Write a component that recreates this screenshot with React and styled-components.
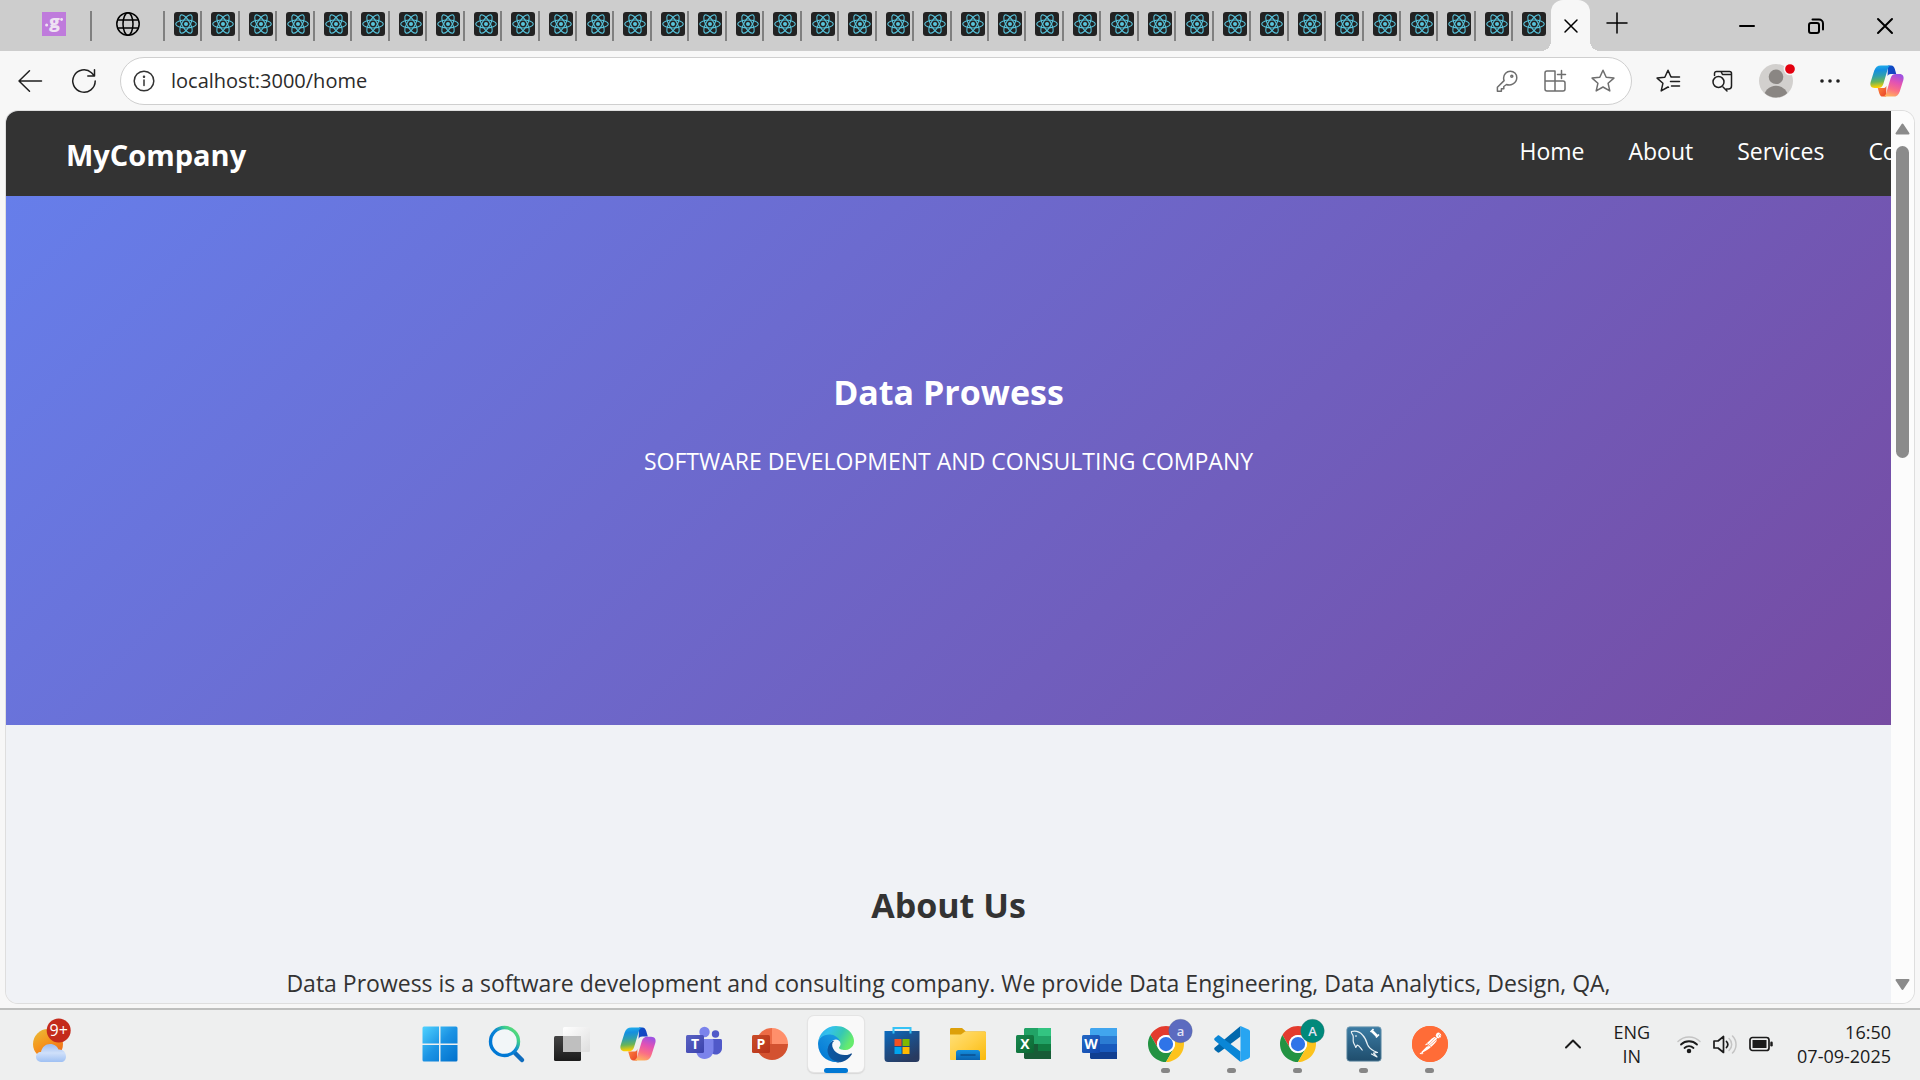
import React from "react";
import styled, { createGlobalStyle, css } from "styled-components";
import { SiPostman } from "react-icons/si";

const GlobalStyle = createGlobalStyle`
  * { box-sizing: border-box; }
  html, body { margin: 0; }
  body {
    font-family: "Segoe UI", "Open Sans", "Noto Sans", sans-serif;
    overflow: hidden;
  }
  button { border: 0; padding: 0; background: none; color: inherit; font: inherit; }
  svg { display: block; flex: none; overflow: visible; }
`;

const Screen = styled.div`
  height: 100vh;
  display: flex;
  flex-direction: column;
  background: #f7f7f7;
`;

/* ---------- browser: tab strip ---------- */

const TabStrip = styled.div`
  flex: none;
  height: 51px;
  display: flex;
  background: #cdcdcd;
`;

const Tabs = styled.div`
  flex: 1;
  min-width: 0;
  display: flex;
`;

const Tab = styled.button`
  flex: ${(p) => (p.$pinned ? "none" : "1 1 0")};
  width: ${(p) => p.$pinned || "auto"};
  min-width: 0;
  display: flex;
  align-items: flex-start;
  justify-content: space-between;
  padding: 11px 0 0 ${(p) => p.$inset || "9px"};
  svg { margin-top: 1px; }
  &::after {
    content: "";
    width: 2px;
    height: 30px;
    background: ${(p) => (p.$last ? "transparent" : "#808080")};
  }
`;

const ActiveTab = styled.button`
  position: relative;
  flex: none;
  width: 39px;
  display: flex;
  align-items: center;
  justify-content: center;
  background: #f7f7f7;
  border-radius: 12px 12px 0 0;
  &::before,
  &::after {
    content: "";
    position: absolute;
    bottom: 0;
    width: 10px;
    height: 10px;
  }
  &::before {
    right: 100%;
    background: radial-gradient(circle at 0 0, transparent 10px, #f7f7f7 10px);
  }
  &::after {
    left: 100%;
    background: radial-gradient(circle at 100% 0, transparent 10px, #f7f7f7 10px);
  }
`;

const NewTab = styled.button`
  flex: none;
  width: 53px;
  padding-bottom: 5px;
  display: flex;
  align-items: center;
  justify-content: center;
`;

const WindowControls = styled.div`
  flex: none;
  display: flex;
  padding: 0 1px 0 69px;
`;

const WindowButton = styled.button`
  width: 69px;
  display: flex;
  align-items: center;
  justify-content: center;
`;

/* ---------- browser: toolbar ---------- */

const Toolbar = styled.div`
  flex: none;
  height: 60px;
  display: flex;
  align-items: center;
  padding: 0 3px;
`;

const ToolButton = styled.button`
  position: relative;
  flex: none;
  width: 54px;
  height: 48px;
  display: flex;
  align-items: center;
  justify-content: center;
  color: ${(p) => (p.$muted ? "#6e6e6e" : "#1f1f1f")};
  ${(p) => p.$narrow && css`width: 48px;`}
  ${(p) => p.$wide && css`width: 60px;`}
`;

const AddressBar = styled.label`
  flex: 1;
  height: 48px;
  margin: 0 9px;
  padding: 0 4px 0 12px;
  display: flex;
  align-items: center;
  background: #fff;
  border: 1px solid #cfcfcf;
  border-radius: 24px;
  color: #333;
`;

const AddressInput = styled.input`
  flex: 1;
  min-width: 0;
  margin-left: 16px;
  padding: 0;
  border: 0;
  outline: 0;
  background: none;
  font: inherit;
  font-size: 20px;
  line-height: 28px;
  color: #2b2b2b;
`;

/* ---------- web page ---------- */

const Viewport = styled.div`
  flex: 1;
  min-height: 0;
  margin: 0 6px 5px;
  display: flex;
  overflow: hidden;
  border-radius: 12px;
  box-shadow: 0 0 0 1px #dedede;
`;

const Page = styled.div`
  flex: 1;
  min-width: 0;
  overflow: hidden;
  background: #f0f2f6;
  text-align: center;
`;

const Navbar = styled.nav`
  box-sizing: content-box;
  width: 100%;
  height: 85px;
  padding: 0 60px;
  display: flex;
  justify-content: space-between;
  background: #333;
  color: #fff;
`;

const Brand = styled.div`
  font-size: 29px;
  font-weight: 700;
  line-height: 40px;
  padding-top: 24px;
`;

const NavLinks = styled.ul`
  margin: 0;
  padding: 24px 0 0;
  display: flex;
  gap: 44px;
  list-style: none;
`;

const NavLink = styled.a`
  color: #fff;
  text-decoration: none;
  font-size: 23px;
  line-height: 32px;
`;

const Hero = styled.header`
  height: 529px;
  padding-top: 172px;
  background: linear-gradient(135deg, #667eea 0%, #764ba2 100%);
  color: #fff;
`;

const Title = styled.h1`
  margin: 0;
  font-size: 34px;
  font-weight: 700;
  line-height: 48px;
`;

const Lead = styled.p`
  margin: ${(p) => p.$gap} 0 0;
  font-size: 23px;
  line-height: 32px;
`;

const About = styled.section`
  padding-top: 156px;
  color: #333;
  white-space: nowrap;
`;

/* ---------- page scrollbar ---------- */

const Scrollbar = styled.div`
  flex: none;
  width: 23px;
  display: flex;
  flex-direction: column;
  align-items: center;
  padding: 12px 0;
  background: #fcfcfc;
`;

const Track = styled.div`
  flex: 1;
  margin: 11px 0;
  width: 13px;
`;

const Thumb = styled.div`
  height: 38%;
  border-radius: 7px;
  background: #8b8b8b;
`;

/* ---------- taskbar ---------- */

const Taskbar = styled.div`
  flex: none;
  height: 72px;
  display: grid;
  grid-template-columns: 8fr auto 9fr;
  background: #eeefef;
  border-top: 2px solid #bebfbe;
`;

const Weather = styled.button`
  place-self: start;
  padding: 8px 0 0 33px;
`;

const Apps = styled.div`
  display: flex;
`;

const AppButton = styled.button`
  width: 66px;
  display: flex;
  flex-direction: column;
  align-items: center;
  padding-top: 6px;
`;

const AppTile = styled.span`
  width: 56px;
  height: 56px;
  padding: 10px;
  display: block;
  border-radius: 6px;
  ${(p) => p.$active && css`
    background: #f9f9f9;
    box-shadow: 0 0 0 1px #e4e4e4, 0 1px 1px 1px #d8d8d8;
  `}
`;

const Indicator = styled.span`
  position: relative;
  width: ${(p) => (p.$active ? "24px" : "9px")};
  height: 5px;
  margin-top: -4px;
  border-radius: 3px;
  background: ${(p) => (p.$active ? "#0078d4" : "#868686")};
`;

const Tray = styled.div`
  display: flex;
  align-items: center;
  justify-content: flex-end;
  padding: 0 29px 3px 0;
  color: #1b1b1b;
  font-size: 18px;
  line-height: 24px;
`;

const TrayButton = styled.button`
  display: flex;
  gap: 12px;
  justify-content: center;
  white-space: pre-line;
  margin-left: ${(p) => p.$gap};
  text-align: ${(p) => p.$align || "center"};
`;

/* ---------- icons ---------- */

const Line = ({ w, h = w, sw = 1.5, children }) => (
  <svg width={w} height={h} viewBox={`0 0 ${w} ${h}`} fill="none" stroke="currentColor"
    strokeWidth={sw} strokeLinecap="round" strokeLinejoin="round" aria-hidden="true">
    {children}
  </svg>
);

const Art = ({ size = 36, children }) => (
  <svg width={size} height={size} viewBox={`0 0 ${size} ${size}`} aria-hidden="true"
    fontFamily="Open Sans, sans-serif">
    {children}
  </svg>
);

const Grad = ({ id, stops, x1 = 0, y1 = 0, x2 = 0, y2 = 1 }) => (
  <linearGradient id={id} x1={x1} y1={y1} x2={x2} y2={y2}>
    {stops.map((c, i) => (
      <stop key={i} offset={i / (stops.length - 1)} stopColor={c} />
    ))}
  </linearGradient>
);

const ReactIcon = () => (
  <Art size={24}>
    <rect width="24" height="24" rx="3" fill="#222" />
    <g fill="none" stroke="#58c4dc" strokeWidth="1.1">
      {[0, 60, 120].map((r) => (
        <ellipse key={r} cx="12" cy="12" rx="10.3" ry="4" transform={`rotate(${r} 12 12)`} />
      ))}
    </g>
    <circle cx="12" cy="12" r="2" fill="#58c4dc" />
  </Art>
);

const GIcon = () => (
  <Art size={24}>
    <rect width="24" height="24" fill="#bf7bdc" />
    <text x="12.5" y="16" fontSize="18" fontWeight="800" fill="#eee2f2" textAnchor="middle">g</text>
    <circle cx="4.6" cy="13" r="1.5" fill="#eee2f2" />
    <circle cx="19.6" cy="7.5" r="1.4" fill="#eee2f2" />
  </Art>
);

const GlobeIcon = () => (
  <Line w={24}>
    <circle cx="12" cy="12" r="11.2" />
    <ellipse cx="12" cy="12" rx="5" ry="11.2" />
    <path d="M2 8h20M2 16h20" />
  </Line>
);

const CopilotIcon = ({ id, size = 36 }) => (
  <svg width={size} height={size} viewBox="0 0 36 36" aria-hidden="true">
    <defs>
      <Grad id={`${id}a`} x2={0.1} stops={["#22b4ee", "#148fe0", "#2f9fae", "#68b45a", "#ffd000"]} />
      <Grad id={`${id}b`} x1={0.6} x2={0.3} stops={["#a052e0", "#e252b4", "#fb6f85", "#ffb45c"]} />
      <Grad id={`${id}c`} x2={1} stops={["#0a50c8", "#1a3fbf"]} />
      <Grad id={`${id}d`} x2={1} stops={["#ff8a3c", "#e8402a"]} />
    </defs>
    <path d="M19 1.500h3.500c2 0 3.100 1.500 3.700 3.600l1.600 5.400h-5.600c-2 0-3 .8-3.600 2.600z" fill={`url(#${id}c)`} />
    <path d="M17 34.500h-3.500c-2 0-3.100-1.500-3.700-3.600l-1.600-5.400h5.600c2 0 3-.8 3.600-2.600z" fill={`url(#${id}d)`} />
    <path d="M11.500 1.500h11c-2 .2-3 1.600-3.700 3.900l-4.600 15.400c-.9 3-2.500 4.500-5.500 4.500H5C1 25.300-.3 22.400.7 19L4.500 7C5.800 3.300 7.800 1.500 11.500 1.500z" fill={`url(#${id}a)`} />
    <path d="M24.500 34.500h-11c2-.2 3-1.600 3.700-3.900l4.600-15.400c.9-3 2.500-4.500 5.500-4.500H31c4 0 5.300 2.900 4.300 6.300L31.500 29c-1.300 3.700-3.300 5.500-7 5.500z" fill={`url(#${id}b)`} />
  </svg>
);

const StartIcon = () => (
  <Art>
    <defs><Grad id="win" x2={1} stops={["#4fd2ff", "#1b93e4", "#0070cc"]} /></defs>
    <path d="M2 .5h15v17H.5V2A1.500 1.500 0 0 1 2 .5zM18.500.5H34A1.500 1.500 0 0 1 35.500 2v15.500h-17zM.5 19H17v16.500H2A1.500 1.500 0 0 1 .5 34zM18.500 19h17v15a1.500 1.500 0 0 1-1.500 1.500H18.500z" fill="url(#win)" />
  </Art>
);

const SearchIcon = () => (
  <Art>
    <defs><Grad id="find" x1={1} x2={0.3} y2={0.7} stops={["#6be06a", "#3fd08a", "#0a84d8", "#0078d4"]} /></defs>
    <path d="M26 26l8 8" stroke="#0f6cbd" strokeWidth="4.500" strokeLinecap="round" />
    <circle cx="16.500" cy="15.500" r="14" fill="#f2f6f8" stroke="url(#find)" strokeWidth="3.400" />
  </Art>
);

const TaskViewIcon = () => (
  <Art>
    <defs>
      <Grad id="tvd" stops={["#444", "#1b1b1b"]} />
      <Grad id="tvl" x2={1} stops={["#ffffff", "#dedede"]} />
    </defs>
    <rect x="0" y="10" width="27" height="25" rx="1.500" fill="url(#tvd)" />
    <rect x="9" y="1" width="27" height="25" rx="1.500" fill="url(#tvl)" />
    <rect x="9" y="10" width="18" height="16" fill="#bfbfbf" />
  </Art>
);

const LetterBadge = ({ letter, colors }) => (
  <>
    <defs><Grad id={`lb${letter}`} x2={1} stops={colors} /></defs>
    <rect x="0" y="9" width="18" height="18" rx="1.500" fill={`url(#lb${letter})`} />
    <text x="9" y="23" fontSize="14" fontWeight="700" fill="#fff" textAnchor="middle">{letter}</text>
  </>
);

const TeamsIcon = () => (
  <Art>
    <circle cx="29.500" cy="8" r="3.700" fill="#5059c9" />
    <path d="M24 13h10.500c.8 0 1.500.7 1.500 1.500V22c0 4-3 6.500-6 6.500S24 27 24 24z" fill="#5059c9" />
    <circle cx="18.500" cy="6" r="5.200" fill="#7b83eb" />
    <path d="M10 13h16c.8 0 1.500.7 1.500 1.500V24c0 5-4 9-9 9s-8.500-4-8.500-9z" fill="#7b83eb" />
    <LetterBadge letter="T" colors={["#5a62c3", "#3a41ac"]} />
  </Art>
);

const PowerPointIcon = () => (
  <Art>
    <path d="M20 2v16H4A16 16 0 0 1 20 2z" fill="#ed6c47" />
    <path d="M20 2a16 16 0 0 1 16 16H20z" fill="#ff8f6b" />
    <path d="M4 18h32a16 16 0 0 1-32 0z" fill="#d35230" />
    <LetterBadge letter="P" colors={["#ca4c28", "#b7321a"]} />
  </Art>
);

const EdgeIcon = () => (
  <svg width="36" height="36" viewBox="0 0 256 256" aria-hidden="true">
    <defs>
      <Grad id="e1" x2={1} y2={0} stops={["#0c59a4", "#114a8b"]} />
      <Grad id="e2" x1={0.8} x2={0.2} stops={["#1b9de2", "#1188da", "#0078d4"]} />
      <Grad id="e3" x2={1} y2={0.4} stops={["#2aa8e6", "#34c1ed", "#36c8b4", "#66eb6e"]} />
    </defs>
    <path fill="url(#e1)" d="M235.680 195.455a93.730 93.730 0 01-10.540 4.710 101.870 101.870 0 01-35.900 6.460c-47.320 0-88.540-32.550-88.540-74.320a31.480 31.480 0 0116.430-27.310c-42.800 1.800-53.800 46.400-53.800 72.530 0 73.880 68.090 81.370 82.760 81.370 7.910 0 19.840-2.300 27-4.560l1.310-.44a128.340 128.340 0 0066.600-52.800 4 4 0 00-5.320-5.640z" />
    <path fill="url(#e2)" d="M105.730 241.415a79.200 79.200 0 01-22.740-21.340 80.720 80.720 0 0129.530-120c3.130-1.470 8.410-4.050 15.510-3.930a32.440 32.440 0 0125.670 13 31.880 31.880 0 016.360 18.660c0-.21 24.460-79.600-80-79.600-43.900 0-80 41.660-80 78.210a130.150 130.150 0 0012.110 56 128 128 0 00156.380 67.110 75.550 75.550 0 01-62.780-8.110z" />
    <path fill="url(#e3)" d="M152.330 148.855c-.81 1.050-3.300 2.500-3.300 5.660 0 2.610 1.700 5.120 4.720 7.230 14.380 10 41.490 8.680 41.560 8.680a59.560 59.560 0 0030.270-8.350 61.380 61.380 0 0030.430-52.880c.26-22.410-8-37.310-11.340-43.910-21.190-41.440-66.920-65.280-116.670-65.280a128 128 0 00-128 126.200c.48-36.540 36.800-66.050 80-66.050 3.500 0 23.460.34 42 10.070 16.340 8.580 24.900 18.940 30.850 29.210 6.180 10.670 7.280 24.150 7.280 29.520 0 5.370-2.740 13.330-7.800 19.900z" />
  </svg>
);

const StoreIcon = () => (
  <Art>
    <defs><Grad id="store" x2={0.6} stops={["#0a6cc0", "#1c4f8a", "#283a60"]} /></defs>
    <path d="M.5 5h35v27.500A3.500 3.500 0 0 1 32 36H4a3.500 3.500 0 0 1-3.500-3.500z" fill="url(#store)" />
    <path d="M9.500 7.500V2h17v5.500" fill="none" stroke="#35c2f5" strokeWidth="2" />
    <path d="M10.500 13h7v7h-7z" fill="#f25022" />
    <path d="M18.500 13h7v7h-7z" fill="#7fba00" />
    <path d="M10.500 21h7v7h-7z" fill="#00a4ef" />
    <path d="M18.500 21h7v7h-7z" fill="#ffb900" />
  </Art>
);

const FolderIcon = () => (
  <Art>
    <defs>
      <Grad id="fold" x2={1} stops={["#ffe07a", "#ffcf45", "#f9b90a"]} />
      <Grad id="foldb" stops={["#1490df", "#0a63b0"]} />
    </defs>
    <path d="M0 3.500C0 2.600.6 2 1.500 2H12l4 3.500h18.500c.9 0 1.500.6 1.500 1.500v6H0z" fill="#dda00a" />
    <path d="M0 8.500h11l4-3h19.500c.9 0 1.500.6 1.500 1.500v26c0 .6-.4 1-1 1H1c-.6 0-1-.4-1-1z" fill="url(#fold)" />
    <path d="M6 34v-7.500A2.500 2.500 0 0 1 8.500 24h19a2.500 2.500 0 0 1 2.500 2.500V34z" fill="url(#foldb)" />
    <path d="M11 29h14" stroke="#0b4f8e" strokeWidth="1.500" strokeLinecap="round" />
  </Art>
);

const ExcelIcon = () => (
  <Art>
    <path d="M9 2h13v8H8V3z" fill="#21a366" />
    <path d="M22 2h13v8H22z" fill="#33c481" />
    <path d="M8 10h14v8H8z" fill="#21a366" />
    <path d="M22 10h13v8H22z" fill="#21a366" />
    <path d="M8 18h27v15H9l-1-1z" fill="#185c37" />
    <path d="M22 18h13v7H22z" fill="#107c41" />
    <LetterBadge letter="X" colors={["#18884f", "#0b6631"]} />
  </Art>
);

const WordIcon = () => (
  <Art>
    <path d="M9 2h26v8H8V3z" fill="#41a5ee" />
    <path d="M8 10h27v8H8z" fill="#2b7cd3" />
    <path d="M8 18h27v8H8z" fill="#185abd" />
    <path d="M8 26h27v7H9l-1-1z" fill="#103f91" />
    <LetterBadge letter="W" colors={["#2368c4", "#1146ac"]} />
  </Art>
);

const ChromeIcon = ({ letter, color }) => (
  <Art>
    <g transform="scale(.75)">
      <path d="M24 12h20.780A24 24 0 0 0 3.220 12L13.600 30A12 12 0 0 1 24 12z" fill="#e33b2e" />
      <path d="M13.600 30L3.220 12A24 24 0 0 0 24 48L34.400 30A12 12 0 0 1 13.600 30z" fill="#229342" />
      <path d="M34.400 30L24 48A24 24 0 0 0 44.780 12H24A12 12 0 0 1 34.400 30z" fill="#fcc31e" />
      <circle cx="24" cy="24" r="12" fill="#fff" />
      <circle cx="24" cy="24" r="9.500" fill="#2f74e8" />
    </g>
    <circle cx="32.500" cy="5" r="11.800" fill={color} stroke="#55606a" strokeOpacity=".4" strokeWidth=".5" />
    <text x="32.500" y="9.500" fontSize="13" fontWeight="600" fill="#e2e4f4" textAnchor="middle">{letter}</text>
  </Art>
);

const CodeIcon = () => (
  <Art>
    <path d="M26.500 0v10.500L5.500 26.300c-.7.500-1.500.5-2 0L.8 24c-.8-.7-.8-1.700 0-2.400z" fill="#0068ad" />
    <path d="M26.500 36V25.500L5.500 9.700c-.7-.5-1.500-.5-2 0L.8 12c-.8.7-.8 1.700 0 2.400z" fill="#0a86d6" />
    <path d="M26.500 0l8 3.500c1 .5 1.500 1.200 1.500 2.200v24.600c0 1-.5 1.700-1.500 2.200l-8 3.500z" fill="#27a5f2" />
  </Art>
);

const WorkbenchIcon = () => (
  <Art>
    <defs><Grad id="wb" stops={["#3b7ca4", "#2d6488", "#1f4d6c"]} /></defs>
    <rect x=".8" y=".8" width="34.400" height="34.400" rx="3" fill="url(#wb)" stroke="#7fa3b8" strokeWidth=".8" />
    <g fill="none" stroke="#e8f0f4" strokeWidth="1.200" strokeLinecap="round" strokeLinejoin="round">
      <path d="M5.500 5.500c4-1 8 0 11 3.500 3 3 4 6 5 9.500 1 3 3 4.500 6.500 6.500l3.500 1.500-4 .5 3.500 4-5.500-3" />
      <path d="M5.500 5.500c-.6 1.500.8 2.500 1.500 4 .8 2-.4 4.500.5 7 .6 1.800 1.800 3 2.300 5l1.400-2.500c2 .5 3 2.500 5 5" />
      <path d="M10 9.500v1" />
    </g>
    <path d="M26 5l5 5" stroke="#fff" strokeWidth="2.600" />
    <path d="M24.500 6l3-3M30 11.500l3-3" stroke="#fff" strokeWidth="1.600" />
  </Art>
);

const PostmanDisc = styled.span`
  display: block;
  border-radius: 50%;
  background: radial-gradient(circle, #fff 66%, #ff6c37 67%);
  color: #ff6c37;
`;

const PostmanIcon = () => <PostmanDisc><SiPostman size={36} /></PostmanDisc>;

const WeatherIcon = () => (
  <svg width="40" height="44" viewBox="0 0 40 44" aria-hidden="true" fontFamily="Open Sans, sans-serif">
    <defs>
      <Grad id="sun" x2={0.6} stops={["#e8bf3a", "#f5971e", "#ef6c1a"]} />
      <Grad id="cloud" stops={["#9dbcf0", "#cfe0fa", "#9fc0f3"]} />
    </defs>
    <circle cx="15" cy="26" r="15" fill="url(#sun)" />
    <path d="M8 44a5 5 0 0 1-5-5c0-3 2-5 5-5 1-5 4.500-8 9-8s7.500 2.500 8.500 5.500c4.500-.5 7.500 3 7.500 7 0 3.500-2 5.500-5 5.500z" fill="url(#cloud)" />
    <circle cx="25.700" cy="12.500" r="12" fill="#c42b1c" />
    <text x="25.700" y="18" fontSize="16" fill="#fff" textAnchor="middle">9+</text>
  </svg>
);

const Arrow = ({ down }) => (
  <svg width="15" height="12" viewBox="0 0 15 12" aria-hidden="true">
    <path d={down ? "M1.500 1h12L7.500 10z" : "M1.500 10.500h12L7.500 1.500z"}
      fill="#8b8b8b" stroke="#8b8b8b" strokeWidth="2" strokeLinejoin="round" />
  </svg>
);

const star = "M12 1.200l3.200 7.100 7.700.8-5.800 5.200 1.700 7.600L12 18l-6.800 3.900 1.700-7.600L1.100 9.100l7.700-.8z";

const REACT_TABS = Array.from({ length: 37 }, (_, i) => i);

const APPS = [
  { name: "Start", icon: <StartIcon /> },
  { name: "Search", icon: <SearchIcon /> },
  { name: "Task View", icon: <TaskViewIcon /> },
  { name: "Copilot", icon: <CopilotIcon id="cpt" /> },
  { name: "Teams", icon: <TeamsIcon /> },
  { name: "PowerPoint", icon: <PowerPointIcon /> },
  { name: "Edge", icon: <EdgeIcon />, running: true, active: true },
  { name: "Store", icon: <StoreIcon /> },
  { name: "File Explorer", icon: <FolderIcon /> },
  { name: "Excel", icon: <ExcelIcon /> },
  { name: "Word", icon: <WordIcon /> },
  { name: "Chrome", icon: <ChromeIcon letter="a" color="#5c6bc0" />, running: true },
  { name: "Code", icon: <CodeIcon />, running: true },
  { name: "Chrome, second profile", icon: <ChromeIcon letter="A" color="#00897b" />, running: true },
  { name: "Workbench", icon: <WorkbenchIcon />, running: true },
  { name: "Postman", icon: <PostmanIcon />, running: true },
];

export default function App() {
  return (
    <Screen>
      <GlobalStyle />
      <TabStrip>
        <Tabs>
          <Tab $pinned="92px" $inset="42px" aria-label="Pinned tab"><GIcon /></Tab>
          <Tab $pinned="73px" $inset="24px" aria-label="Pinned tab"><GlobeIcon /></Tab>
          {REACT_TABS.map((i) => (
            <Tab key={i} $last={i === REACT_TABS.length - 1} aria-label={`React App ${i + 1}`}>
              <ReactIcon />
            </Tab>
          ))}
        </Tabs>
        <ActiveTab aria-label="Close tab">
          <Line w={14}><path d="M1 1l12 12M13 1L1 13" /></Line>
        </ActiveTab>
        <NewTab aria-label="New tab">
          <Line w={22}><path d="M11 1v20M1 11h20" /></Line>
        </NewTab>
        <WindowControls>
          <WindowButton aria-label="Minimize"><Line w={16} sw={2}><path d="M1 8h14" /></Line></WindowButton>
          <WindowButton aria-label="Restore">
            <Line w={16} sw={2}>
              <rect x="1" y="5" width="10" height="10" rx="2" />
              <path d="M4.500 1.500H11a4 4 0 0 1 4 4v6" />
            </Line>
          </WindowButton>
          <WindowButton aria-label="Close"><Line w={16} sw={2}><path d="M1 1l14 14M15 1L1 15" /></Line></WindowButton>
        </WindowControls>
      </TabStrip>

      <Toolbar>
        <ToolButton aria-label="Back">
          <Line w={24}><path d="M23.500 12H1M11.500 1.800L1 12l10.500 10.200" /></Line>
        </ToolButton>
        <ToolButton aria-label="Refresh">
          <Line w={24}><path d="M23.200 12A11.200 11.200 0 1 1 19.500 3.700L22.500 7M22.500.8V7h-6.700" /></Line>
        </ToolButton>
        <AddressBar>
          <Line w={22}>
            <circle cx="11" cy="11" r="9.800" />
            <path d="M11 10v5.500" />
            <circle cx="11" cy="6.800" r=".5" fill="currentColor" />
          </Line>
          <AddressInput aria-label="Address" defaultValue="localhost:3000/home" />
          <ToolButton $muted $narrow aria-label="Passwords">
            <Line w={22}>
              <path d="M8.100 10.600L1.400 17.300v3.900h4v-2.400h2.400v-2.300l2.700-2c4 1.700 10-1 10.300-6.800C20.800 4 18 1.200 14.300 1.200S7.600 4.200 7.600 8c0 1 .2 1.800.5 2.600z" />
              <circle cx="15.800" cy="6.200" r="1" />
            </Line>
          </ToolButton>
          <ToolButton $muted $narrow aria-label="Apps">
            <Line w={22}>
              <path d="M1 3a2 2 0 0 1 2-2h8v20H3a2 2 0 0 1-2-2zM1 11h18a2 2 0 0 1 2 2v6a2 2 0 0 1-2 2h-8M17.500.500v8M13.500 4.500h8" />
            </Line>
          </ToolButton>
          <ToolButton $muted $narrow aria-label="Add to favorites"><Line w={24}><path d={star} /></Line></ToolButton>
        </AddressBar>
        <ToolButton aria-label="Favorites">
          <Line w={24}>
            <path d="M12.500 18.300L12 18l-6.800 3.900 1.700-7.600L1.100 9.100l7.700-.8L12 1.200l3 6.800M15.500 8h8M14.500 12.500h9M15.500 17h8" />
          </Line>
        </ToolButton>
        <ToolButton aria-label="Search tabs">
          <Line w={22}>
            <path d="M3.500 5.500V3.500a2 2 0 0 1 2-2h13a2 2 0 0 1 2 2V16a3 3 0 0 1-3 3h-2M10 1.500l1.500 3h9M12 17l4 4" />
            <circle cx="7.500" cy="12" r="5.500" />
          </Line>
        </ToolButton>
        <ToolButton aria-label="Profile">
          <Art size={34}>
            <defs><clipPath id="av"><circle cx="17" cy="17" r="16.500" /></clipPath></defs>
            <circle cx="17" cy="17" r="17" fill="#d2d0ce" />
            <g clipPath="url(#av)" fill="#8a8683">
              <circle cx="17" cy="12.800" r="7.300" />
              <circle cx="17" cy="34" r="12.300" />
            </g>
            <circle cx="31" cy="5" r="5.600" fill="#e3000f" stroke="#f7f7f7" strokeWidth="1.500" />
          </Art>
        </ToolButton>
        <ToolButton aria-label="More">
          <Line w={22}>
            <g fill="currentColor" stroke="none">
              <circle cx="3" cy="11" r="1.800" /><circle cx="11" cy="11" r="1.800" /><circle cx="19" cy="11" r="1.800" />
            </g>
          </Line>
        </ToolButton>
        <ToolButton $wide aria-label="Copilot"><CopilotIcon id="cpb" size={34} /></ToolButton>
      </Toolbar>

      <Viewport>
        <Page>
          <Navbar>
            <Brand>MyCompany</Brand>
            <NavLinks>
              {["Home", "About", "Services", "Contact"].map((t) => (
                <li key={t}><NavLink href={`#${t.toLowerCase()}`}>{t}</NavLink></li>
              ))}
            </NavLinks>
          </Navbar>
          <Hero>
            <Title>Data Prowess</Title>
            <Lead $gap="29px">SOFTWARE DEVELOPMENT AND CONSULTING COMPANY</Lead>
          </Hero>
          <About>
            <Title as="h2">About Us</Title>
            <Lead $gap="38px">
              Data Prowess is a software development and consulting company. We provide Data Engineering, Data Analytics, Design, QA,
            </Lead>
          </About>
        </Page>
        <Scrollbar>
          <Arrow />
          <Track><Thumb /></Track>
          <Arrow down />
        </Scrollbar>
      </Viewport>

      <Taskbar>
        <Weather aria-label="Weather"><WeatherIcon /></Weather>
        <Apps>
          {APPS.map((a) => (
            <AppButton key={a.name} aria-label={a.name}>
              <AppTile $active={a.active}>{a.icon}</AppTile>
              {a.running && <Indicator $active={a.active} />}
            </AppButton>
          ))}
        </Apps>
        <Tray>
          <TrayButton aria-label="Show hidden icons"><Line w={16} h={10} sw={2}><path d="M1 8.500L8 1.500l7 7" /></Line></TrayButton>
          <TrayButton $gap="32px">{"ENG\nIN"}</TrayButton>
          <TrayButton $gap="27px" aria-label="Network, volume and battery">
            <Line w={24}>
              <path d="M1 9.500a15.500 15.500 0 0 1 22 0" stroke="#c4c4c4" />
              <path d="M4 12.500a11.500 11.500 0 0 1 16 0M7.500 16a6.500 6.500 0 0 1 9 0" strokeWidth="1.800" />
              <circle cx="12" cy="19" r="1.500" fill="currentColor" />
            </Line>
            <Line w={24}>
              <path d="M1 9h4l5.500-4.500v16L5 16H1zM13.500 9.500a4.500 4.500 0 0 1 0 6" strokeWidth="1.700" />
              <path d="M16 6.500a8 8 0 0 1 0 12M19.500 4a12 12 0 0 1 0 17" stroke="#c4c4c4" />
            </Line>
            <Line w={24}>
              <rect x="1" y="5.500" width="19" height="13" rx="2.500" strokeWidth="1.700" />
              <path d="M3.500 8h14v8h-14z" fill="currentColor" stroke="none" />
              <path d="M22.500 10.800v2.500" strokeWidth="2.500" />
            </Line>
          </TrayButton>
          <TrayButton $gap="24px" $align="right">{"16:50\n07-09-2025"}</TrayButton>
        </Tray>
      </Taskbar>
    </Screen>
  );
}
